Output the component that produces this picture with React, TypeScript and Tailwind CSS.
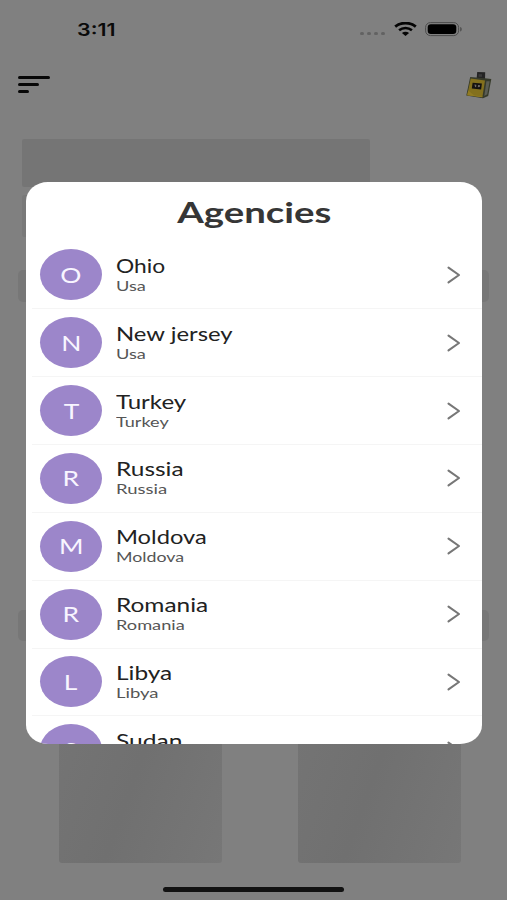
import { Fragment } from "react"

type Agency = {
  name: string
  country: string
  nameClass: string
  countryClass: string
}

const agencies: Agency[] = [
  { name: "Ohio", country: "Usa", nameClass: "scale-x-[1.23]", countryClass: "scale-x-[1.3]" },
  { name: "New jersey", country: "Usa", nameClass: "scale-x-[1.29]", countryClass: "scale-x-[1.3]" },
  { name: "Turkey", country: "Turkey", nameClass: "scale-x-[1.3]", countryClass: "scale-x-[1.29]" },
  { name: "Russia", country: "Russia", nameClass: "scale-x-[1.32]", countryClass: "scale-x-[1.32]" },
  { name: "Moldova", country: "Moldova", nameClass: "scale-x-[1.28]", countryClass: "scale-x-[1.27]" },
  { name: "Romania", country: "Romania", nameClass: "scale-x-[1.32]", countryClass: "scale-x-[1.3]" },
  { name: "Libya", country: "Libya", nameClass: "scale-x-[1.32]", countryClass: "scale-x-[1.32]" },
  { name: "Sudan", country: "Sudan", nameClass: "scale-x-[1.33]", countryClass: "scale-x-[1.32]" },
]

function StatusBar() {
  return (
    <div className="flex h-[58px] items-center justify-between pl-[77px] pr-[44px]">
      <span className="mt-px origin-left scale-x-[1.26] font-['Inter',sans-serif] text-[17px] font-semibold leading-5 text-[#0a0a0a]">
        3:11
      </span>
      <div className="flex items-center">
        <div className="mr-[9px] mt-[9px] flex gap-[3px]">
          {[0, 1, 2, 3].map((dot) => (
            <span key={dot} className="h-[3.5px] w-[4px] rounded-full bg-[#626262]" />
          ))}
        </div>
        <svg width="23" height="15" viewBox="0 0 23 15" className="mr-[8px]" fill="none" stroke="#050505">
          <path d="M1.2 4.6C7 -0.1 16 -0.1 21.8 4.6" strokeWidth="2.8" />
          <path d="M5.1 8.3C8.8 5.2 14.2 5.2 17.9 8.3" strokeWidth="2.6" />
          <path d="M7.9 11.1C10 9.3 13 9.3 15.1 11.1L11.5 13.9Z" fill="#050505" stroke="none" />
        </svg>
        <svg width="38" height="15" viewBox="0 0 38 15">
          <rect x="0.6" y="0.6" width="33" height="13" rx="4.8" fill="none" stroke="#4c4c4c" strokeWidth="1" />
          <rect x="2.7" y="2.3" width="28.6" height="9.6" rx="3.2" fill="#000" />
          <path d="M35.2 4.9c2 .6 2 3.9 0 4.5z" fill="#4c4c4c" />
        </svg>
      </div>
    </div>
  )
}

function PerfumeIcon() {
  return (
    <svg width="27" height="29" viewBox="0 0 27 29">
      <path d="M12.2 1 20.2 1.2 20 9 11.6 8z" fill="#242424" />
      <path d="M13.6 3.2h3.4v2.6h-3.4z" fill="#3a3a3a" />
      <path d="M5.2 6 20 7.3 26.3 8 23.2 25 18 27.2 1.3 24.6z" fill="#363a2a" />
      <path d="m21.4 10.2 3.3.1-2.4 12.9-3 1.8z" fill="#5b5d54" />
      <path d="M5.7 7.6 20 9.6 17.4 26.3 2.2 24.2z" fill="#83701d" />
      <path d="M3.2 19.6 9 24.2l8.4 1.2-.1.9-15.1-2.1z" fill="#917b22" />
      <path d="m7.6 11.8 9.3.8-.8 5.8-9.3-1z" fill="#14110f" />
      <path d="m9.4 13.6 2 .2-.3 2.4-1-.1zM13 14l2.2.2-.5 1.9-1.9.2z" fill="#6f6a66" />
    </svg>
  )
}

function Backdrop() {
  return (
    <div className="flex h-full flex-col bg-[#808080]">
      <StatusBar />
      <header className="flex h-[54px] items-center justify-between pl-[18px] pr-[15px]">
        <div className="flex flex-col gap-[4px] pb-px">
          <span className="h-[3px] w-[32px] rounded-full bg-[#080808]" />
          <span className="h-[3px] w-[21px] rounded-full bg-[#080808]" />
          <span className="h-[3px] w-[11px] rounded-full bg-[#080808]" />
        </div>
        <PerfumeIcon />
      </header>

      {/* Loading placeholders */}
      <div className="flex flex-col px-[18px] pt-[27px]">
        <div className="ml-[4px] h-[48px] w-[348px] rounded-[2px] bg-[#757575]" />
        <div className="ml-[4px] mt-[8px] h-[42px] w-[240px] rounded-[2px] bg-[#797979]" />
        <div className="mt-[33px] h-[32px] rounded-[5px] bg-[#777777]" />
        <div className="mt-[308px] h-[31px] rounded-[5px] bg-[#777777]" />
      </div>
      <div className="flex gap-[76px] pl-[59px] pt-[20px]">
        <div className="h-[202px] w-[163px] rounded-[3px] bg-linear-110 from-[#757575] via-[#707070] to-[#777777]" />
        <div className="h-[202px] w-[163px] rounded-[3px] bg-linear-110 from-[#757575] via-[#707070] to-[#777777]" />
      </div>
      <div className="mx-auto mt-[24px] h-[5px] w-[181px] rounded-full bg-[#121212]" />
    </div>
  )
}

function AgencyRow({ agency }: { agency: Agency }) {
  return (
    <div className="flex h-[66.85px] shrink-0 items-center pl-[14px] pr-[21px]">
      <div className="flex h-[51px] w-[62px] shrink-0 items-center justify-center rounded-[50%] bg-[#9c86ca]">
        <span className="scale-x-[1.2] text-[22px] leading-none text-[#f8f5ff]">{agency.name[0]}</span>
      </div>
      <div className="ml-[14px] flex flex-1 flex-col items-start whitespace-nowrap pb-px">
        <span className={`origin-left text-[18.5px] leading-[22px] text-[#222222] ${agency.nameClass}`}>
          {agency.name}
        </span>
        <span className={`origin-left text-[14px] leading-[17px] text-[#555555] ${agency.countryClass}`}>
          {agency.country}
        </span>
      </div>
      <svg width="14" height="18" viewBox="0 0 14 18" fill="none">
        <path d="M1.5 1.6 12 9 1.5 16.4" stroke="#777777" strokeWidth="2.1" strokeLinecap="round" strokeLinejoin="round" />
      </svg>
    </div>
  )
}

export default function App() {
  return (
    <div className="relative h-[900px] w-[507px] overflow-hidden font-['Lato','Open_Sans',sans-serif]">
      <Backdrop />
      <div className="absolute inset-0 px-[26px] pt-[182px]">
        <div className="flex h-[561.5px] w-[456px] flex-col overflow-hidden rounded-[22px/19px] bg-white">
          <h1 className="flex h-[59.5px] shrink-0 items-center justify-center text-[28px] font-bold leading-none text-[#363636]">
            <span className="scale-x-[1.37]">Agencies</span>
          </h1>
          {agencies.map((agency) => (
            <Fragment key={agency.name}>
              <AgencyRow agency={agency} />
              <div className="ml-[6px] h-px shrink-0 bg-[#f5f5f5]" />
            </Fragment>
          ))}
        </div>
      </div>
    </div>
  )
}
